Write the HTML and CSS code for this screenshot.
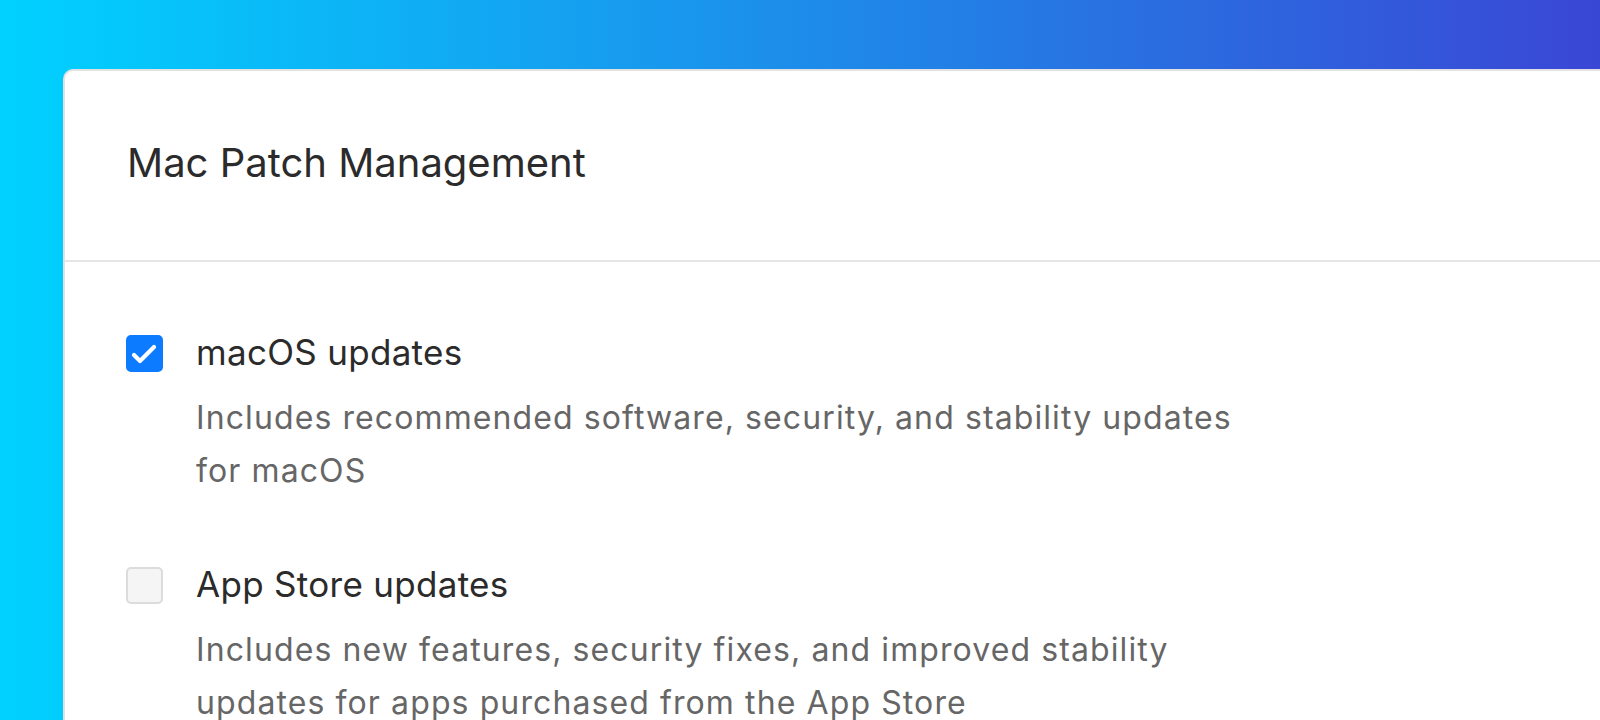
FILE: index.html
```html
<!DOCTYPE html>
<html lang="en">
<head>
    <meta charset="UTF-8">
    <meta name="viewport" content="width=device-width, initial-scale=1.0">
    <title>Mac Patch Management</title>
    <link rel="stylesheet" href="styles.css">
</head>
<body>

    <div class="panel">
        <div class="panel-header">
            <h2>Mac Patch Management</h2>
        </div>

        <div class="panel-body">
            <!-- Opciones de actualizacion -->
            <label class="option">
                <span class="check checked">
                    <svg viewBox="0 0 37 37" width="37" height="37">
                        <polyline points="8,20 14,26 28,12" fill="none" stroke="#fff" stroke-width="4.2" stroke-linecap="round" stroke-linejoin="round"/>
                    </svg>
                </span>
                <span class="option-text">
                    <span class="option-title">macOS updates</span>
                    <span class="option-desc">Includes recommended software, security, and stability updates for macOS</span>
                </span>
            </label>

            <label class="option">
                <span class="check"></span>
                <span class="option-text">
                    <span class="option-title">App Store updates</span>
                    <span class="option-desc">Includes new features, security fixes, and improved stability updates for apps purchased from the App Store</span>
                </span>
            </label>
        </div>
    </div>

</body>
</html>
```

FILE: styles.css
```css
body {
    margin: 0;
    padding: 69px 0 0 63px;
    height: 720px;
    box-sizing: border-box;
    overflow: hidden;
    background: linear-gradient(to right, #00d2ff, #3a47d5);
    font-family: Inter, "Liberation Sans", sans-serif;
}

.panel {
    background-color: #fff;
    border: 2px solid #e2e2e2;
    border-right: none;
    border-bottom: none;
    border-radius: 10px 0 0 0;
    height: 700px;
}

.panel-header {
    padding: 68px 0 73px 62px;
    border-bottom: 2px solid #e6e6e6;
}

.panel-header h2 {
    margin: 0;
    font-size: 40px;
    line-height: 48px;
    font-weight: 400;
    color: #2b2b2b;
}

.panel-body {
    padding: 68px 0 0 61px;
}

.option {
    display: flex;
    align-items: flex-start;
    gap: 33px;
    margin-bottom: 65px;
}

.check {
    flex: none;
    width: 37px;
    height: 37px;
    margin-top: 5px;
    box-sizing: border-box;
    border-radius: 5px;
    border: 2px solid #dcdcdc;
    background-color: #f5f5f5;
}

.check svg {
    display: block;
    margin: -2px;
}

.check.checked {
    border-color: #0d7bff;
    background-color: #0d7bff;
}

.option-text {
    display: flex;
    flex-direction: column;
}

.option-title {
    font-size: 35px;
    line-height: 44px;
    font-weight: 400;
    letter-spacing: 0.3px;
    color: #2b2b2b;
}

.option-desc {
    margin-top: 17px;
    max-width: 1060px;
    font-size: 32px;
    line-height: 53px;
    letter-spacing: 1.1px;
    color: #666;
}
```
